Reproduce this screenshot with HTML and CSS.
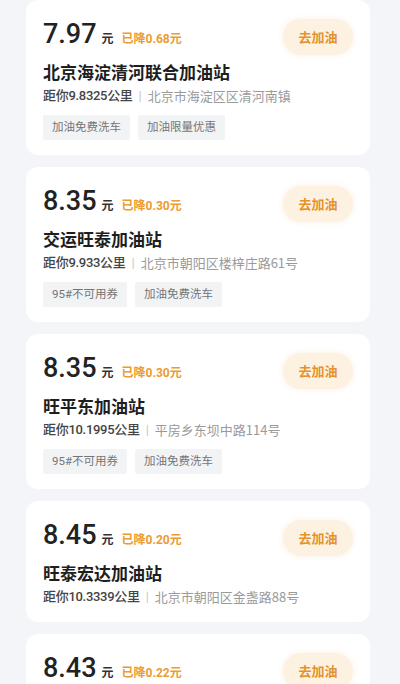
FILE: index.html
```html
<!DOCTYPE html>
<html>
	<head>
		<meta charset="utf-8">
		<title>加油站列表</title>

		<link rel="stylesheet" href="styles.css">
	</head>
	<body>
		<div class="list">
			<div class="card">
				<div class="top">
					<div class="price">
						<span class="num">7.97</span>
						<span class="unit">元</span>
						<span class="down">已降0.68元</span>
					</div>
					<div class="btn">去加油</div>
				</div>
				<div class="name">北京海淀清河联合加油站</div>
				<div class="info">
					<span class="dist">距你9.8325公里</span>
					<span class="sep">|</span>
					<span class="addr">北京市海淀区区清河南镇</span>
				</div>
				<div class="tags">
					<span class="tag">加油免费洗车</span>
					<span class="tag">加油限量优惠</span>
				</div>
			</div>

			<div class="card">
				<div class="top">
					<div class="price">
						<span class="num">8.35</span>
						<span class="unit">元</span>
						<span class="down">已降0.30元</span>
					</div>
					<div class="btn">去加油</div>
				</div>
				<div class="name">交运旺泰加油站</div>
				<div class="info">
					<span class="dist">距你9.933公里</span>
					<span class="sep">|</span>
					<span class="addr">北京市朝阳区楼梓庄路61号</span>
				</div>
				<div class="tags">
					<span class="tag">95#不可用券</span>
					<span class="tag">加油免费洗车</span>
				</div>
			</div>

			<div class="card">
				<div class="top">
					<div class="price">
						<span class="num">8.35</span>
						<span class="unit">元</span>
						<span class="down">已降0.30元</span>
					</div>
					<div class="btn">去加油</div>
				</div>
				<div class="name">旺平东加油站</div>
				<div class="info">
					<span class="dist">距你10.1995公里</span>
					<span class="sep">|</span>
					<span class="addr">平房乡东坝中路114号</span>
				</div>
				<div class="tags">
					<span class="tag">95#不可用券</span>
					<span class="tag">加油免费洗车</span>
				</div>
			</div>

			<div class="card">
				<div class="top">
					<div class="price">
						<span class="num">8.45</span>
						<span class="unit">元</span>
						<span class="down">已降0.20元</span>
					</div>
					<div class="btn">去加油</div>
				</div>
				<div class="name">旺泰宏达加油站</div>
				<div class="info">
					<span class="dist">距你10.3339公里</span>
					<span class="sep">|</span>
					<span class="addr">北京市朝阳区金盏路88号</span>
				</div>
			</div>

			<div class="card">
				<div class="top">
					<div class="price">
						<span class="num">8.43</span>
						<span class="unit">元</span>
						<span class="down">已降0.22元</span>
					</div>
					<div class="btn">去加油</div>
				</div>
			</div>
		</div>
	</body>
</html>
```

FILE: styles.css
```css
* {
	margin: 0;
	padding: 0;
}

body {
	background: #f4f5f8;
	font-family: Roboto, "Noto Sans CJK SC", sans-serif;
	color: #222222;
	overflow: hidden;
}

.list {
	display: flex;
	flex-direction: column;
	gap: 12px;
	padding: 0 30px 0 26px;
}

.card {
	background: #ffffff;
	border-radius: 12px;
	padding: 20px 17px 15px 17px;
}

.top {
	display: flex;
	justify-content: space-between;
	align-items: flex-start;
}

.price {
	display: flex;
	align-items: baseline;
	height: 28px;
}

.num {
	font-size: 27px;
	line-height: 28px;
	font-weight: 500;
	color: #222222;
}

.unit {
	font-size: 12px;
	font-weight: 700;
	margin-left: 5px;
	color: #333333;
	font-family: "Noto Sans CJK SC", sans-serif;
}

.down {
	font-size: 12px;
	font-weight: 700;
	margin-left: 8px;
	color: #eb9c32;
}

.btn {
	width: 70px;
	height: 36px;
	line-height: 36px;
	margin-top: -1px;
	text-align: center;
	border-radius: 18px;
	background: #fdf1e2;
	box-shadow: 0 0 6px 1px #fdf3e8;
	color: #e4932c;
	font-size: 13px;
	font-weight: 700;
	font-family: "Noto Sans CJK SC", sans-serif;
}

.name {
	margin-top: 5px;
	font-size: 17px;
	line-height: 24px;
	font-weight: 700;
	color: #1e1e1e;
	font-family: "Noto Sans CJK SC", sans-serif;
}

.info {
	margin-top: 2px;
	font-size: 13px;
	line-height: 20px;
	display: flex;
	align-items: center;
	white-space: nowrap;
}

.dist {
	color: #444444;
	font-weight: 500;
	letter-spacing: -0.3px;
}

.sep {
	color: #c8c8c8;
	margin: 0 6px;
}

.addr {
	color: #9a9a9a;
	font-family: "Noto Sans CJK SC", sans-serif;
}

.tags {
	display: flex;
	gap: 8px;
	margin-top: 9px;
}

.tag {
	height: 25px;
	line-height: 25px;
	padding: 0 9px;
	background: #f2f3f5;
	color: #757575;
	font-size: 11.5px;
	border-radius: 2px;
}
```
